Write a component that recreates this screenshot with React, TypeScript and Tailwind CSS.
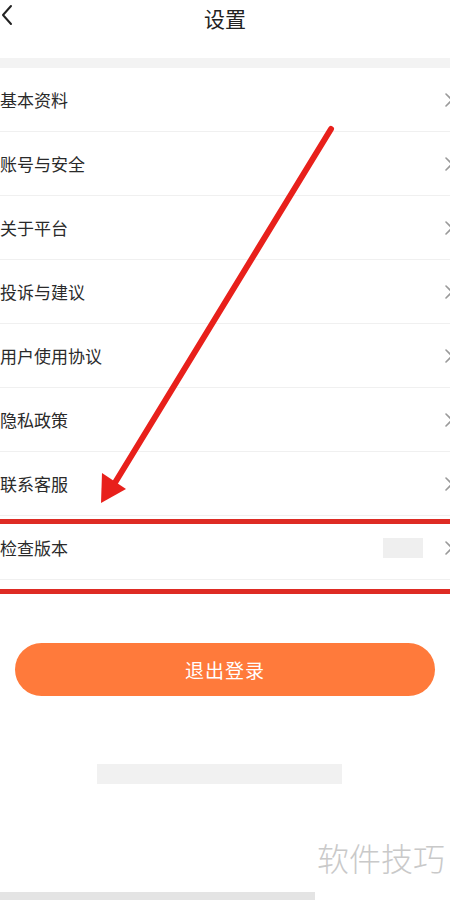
import React from "react";

const items = ["基本资料", "账号与安全", "关于平台", "投诉与建议", "用户使用协议", "隐私政策", "联系客服", "检查版本"];

function Chevron() {
  return (
    <svg width="10" height="16" viewBox="0 0 10 16" className="shrink-0">
      <path d="M2 2 L8 8 L2 14" fill="none" stroke="#9a9a9a" strokeWidth="1.6" strokeLinecap="round" strokeLinejoin="round" />
    </svg>
  );
}

export default function App() {
  return (
    <div
      className="relative w-[450px] h-[900px] overflow-hidden bg-white text-[#333]"
      style={{ fontFamily: '"Noto Sans CJK SC", "Noto Sans", sans-serif' }}
    >
      <div className="relative h-[58px] flex items-center justify-center">
        <svg width="14" height="22" viewBox="0 0 14 22" className="absolute left-[0px] top-[4px]">
          <path d="M11 2 L3 11 L11 20" fill="none" stroke="#222" strokeWidth="2" strokeLinecap="round" strokeLinejoin="round" />
        </svg>
        <span className="text-[21px] leading-none -mt-[22px] text-[#222]">设置</span>
      </div>
      <div className="h-[10px] bg-[#f3f3f3]" />
      <div className="flex flex-col">
        {items.map((t, i) => (
          <div key={t} className="h-[64px] flex items-center border-b border-[#f0f0f0]">
            <span className="text-[17px] leading-none text-[#2a2a2a] flex-1">{t}</span>
            {i === 7 && <div className="w-[40px] h-[20px] bg-[#efefef] mr-[20px]" />}
            <div className="w-[7px] overflow-hidden flex">
              <div className="ml-[1px]"><Chevron /></div>
            </div>
          </div>
        ))}
      </div>
      <div className="flex justify-center mt-[63px]">
        <div className="w-[420px] h-[53px] rounded-full bg-[#ff7a3b] flex items-center justify-center">
          <span className="text-white text-[19px] leading-none tracking-[1px]">退出登录</span>
        </div>
      </div>
      <div className="ml-[97px] mt-[68px] w-[245px] h-[20px] bg-[#f1f1f1]" />
      <div className="flex justify-end pr-[5px] mt-[57px]">
        <span className="text-[32px] leading-none text-[#c9c9c9] font-light">软件技巧</span>
      </div>
      <div className="absolute left-0 bottom-0 w-[315px] h-[8px] bg-[#e4e4e4]" />

      <div className="absolute left-0 top-[519px] w-[450px] h-[5px] bg-[#de2b24]" />
      <div className="absolute left-0 top-[589px] w-[450px] h-[5px] bg-[#de2b24]" />
      <svg className="absolute left-0 top-0 pointer-events-none" width="450" height="900" viewBox="0 0 450 900">
        <line x1="331" y1="129" x2="113" y2="486" stroke="#e8201b" strokeWidth="6" strokeLinecap="round" />
        <polygon points="101,503 102,473 126,489" fill="#e8201b" />
      </svg>
    </div>
  );
}
